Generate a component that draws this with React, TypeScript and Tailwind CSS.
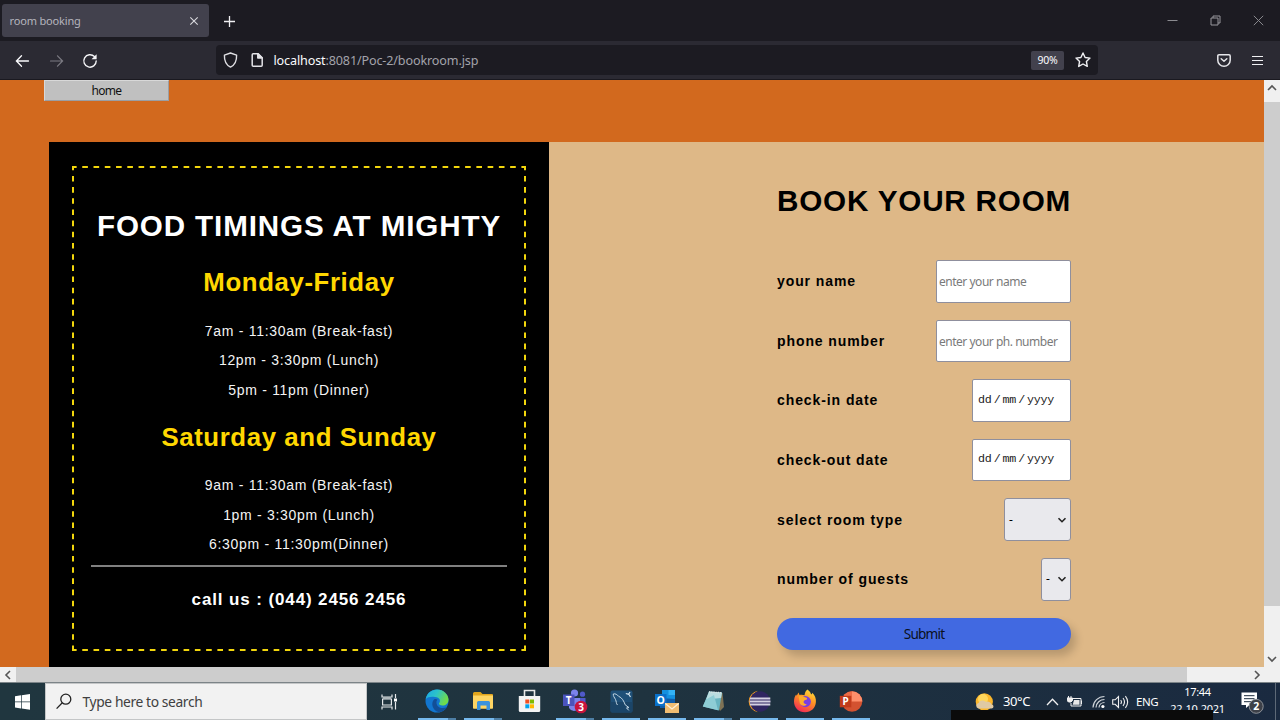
import type { ReactNode } from "react";

const Chevron = ({ d, className }: { d: string; className: string }) => (
  <svg viewBox="0 0 10 10" className={className} fill="none" stroke="currentColor" strokeWidth="1.6">
    <path d={d} />
  </svg>
);

function TabBar() {
  return (
    <div className="flex h-[41px] shrink-0 items-center bg-[#1c1b22] pl-[2px] text-[#fbfbfe]">
      <div className="flex h-[33px] w-[207px] items-center justify-between rounded-[3px] bg-[#42414d] pl-[7.5px] pr-[10px]">
        <span className="pt-[2px] font-['Noto_Sans',sans-serif] text-[11px] tracking-[-0.16px] text-[#b5b5bd]">room booking</span>
        <svg width="10" height="10" viewBox="0 0 10 10" fill="none" stroke="#d8d8dd" strokeWidth="1.1">
          <path d="M1.3 1.3l7.4 7.4M8.7 1.3L1.3 8.7" />
        </svg>
      </div>
      <svg className="ml-[14px] mt-[1px]" width="13" height="13" viewBox="0 0 13 13" fill="none" stroke="#f0f0f3" strokeWidth="1.3">
        <path d="M6.5 1v11M1 6.5h11" />
      </svg>
      <div className="ml-auto flex items-center gap-[32px] pr-[16.5px]">
        <svg width="11" height="11" viewBox="0 0 11 11" stroke="#8b8b90" strokeWidth="1">
          <path d="M.5 5.5h10" />
        </svg>
        <svg width="11" height="11" viewBox="0 0 11 11" fill="none" stroke="#97979c" strokeWidth="1">
          <path d="M1 3h7v7H1zM3 3V1h7v7H8" />
        </svg>
        <svg width="11" height="11" viewBox="0 0 11 11" fill="none" stroke="#88888d" strokeWidth="1">
          <path d="M.8.8l9.4 9.4M10.2.8L.8 10.2" />
        </svg>
      </div>
    </div>
  );
}

function Toolbar() {
  return (
    <div className="flex h-[39px] shrink-0 items-center border-b border-[#1a1920] bg-[#2b2a33]">
      <svg className="ml-[15px] mt-[1px]" width="15" height="14" viewBox="0 0 15 14" fill="none" stroke="#fbfbfe" strokeWidth="1.3" strokeLinecap="round">
        <path d="M1.5 7h12M6.5 1.8L1.4 7l5.1 5.2" />
      </svg>
      <svg className="ml-[19px] mt-[1px]" width="15" height="14" viewBox="0 0 15 14" fill="none" stroke="#7c7b83" strokeWidth="1.2" strokeLinecap="round">
        <path d="M1.5 7h12M8.5 1.8l5.1 5.2-5.1 5.2" />
      </svg>
      <svg className="ml-[18px] mt-[1px]" width="16" height="16" viewBox="0 0 16 16" fill="none" stroke="#f5f5f8" strokeWidth="1.4" strokeLinecap="round">
        <path d="M12.4 3.6A6.2 6.2 0 1 0 14.2 8" />
        <path d="M14.6 1.2v5.1H9.500z" fill="#f5f5f8" stroke="none" />
      </svg>
      <div className="ml-[118px] flex h-[30px] w-[882px] items-center rounded-[4px] bg-[#1c1b22]">
        <svg className="ml-[7px]" width="15" height="16" viewBox="0 0 15 16" fill="none" stroke="#dedee2" strokeWidth="1.4" strokeLinejoin="round">
          <path d="M7.5 1L13.6 3.1c.2 5.4-1.4 9.7-6.1 12C2.800 12.800 1.200 8.500 1.400 3.100z" />
        </svg>
        <svg className="ml-[13px]" width="12" height="14" viewBox="0 0 12 14" fill="none" stroke="#e3e3e7" strokeWidth="1.5" strokeLinejoin="round">
          <path d="M2.200 .8h5l4 4v7.400q0 1-1 1h-8q-1 0-1-1V1.800q0-1 1-1z" />
          <path d="M6.800 .8v4.300h4.400z" fill="#e3e3e7" />
        </svg>
        <div className="ml-[10.500px] pt-[2px] font-['Noto_Sans',sans-serif] text-[12.6px] tracking-[-0.140px] text-[#a3a3ab]">
          <span className="text-[#fbfbfe]">localhost</span>:8081/Poc-2/bookroom.jsp
        </div>
        <div className="ml-auto flex h-[19px] w-[33px] items-center justify-center rounded-[2px] bg-[#42414d] pt-[2px] font-['Noto_Sans',sans-serif] text-[10.5px] tracking-[-0.3px] text-[#fbfbfe]">
          90%
        </div>
        <svg className="ml-[11px] mr-[7px]" width="16" height="16" viewBox="0 0 16 16" fill="none" stroke="#f0f0f3" strokeWidth="1.4" strokeLinejoin="round">
          <path d="M8 1l2.100 4.500 4.900.6-3.600 3.400.9 4.900L8 12l-4.300 2.400.9-4.900L1 6.100l4.900-.6z" />
        </svg>
      </div>
      <svg className="ml-[119px]" width="14" height="13" viewBox="0 0 14 13" fill="none" stroke="#e6e6ea" strokeWidth="1.5" strokeLinejoin="round" strokeLinecap="round">
        <path d="M2 .8h10q1.200 0 1.200 1.200v4.200a6.200 6 0 0 1-12.400 0V2Q.8.8 2 .8z" />
        <path d="M4.200 4.700L7 7.300l2.800-2.600" />
      </svg>
      <svg className="ml-[20px]" width="13" height="11" viewBox="0 0 13 11" stroke="#f0f0f3" strokeWidth="1.200">
        <path d="M1 1.500h11M1 5.500h11M1 9.500h11" />
      </svg>
    </div>
  );
}

const Day = ({ children, className }: { children: ReactNode; className: string }) => (
  <h2 className={`${className} whitespace-nowrap text-[25.800px] font-bold leading-[30px] tracking-[0.600px] text-[#ffd700]`}>{children}</h2>
);

const Times = ({ items, className }: { items: string[]; className: string }) => (
  <div className={`${className} flex flex-col text-[14px] leading-[29.300px] tracking-[0.700px] text-[#f4f4f4]`}>
    {items.map((t) => (
      <p key={t}>{t}</p>
    ))}
  </div>
);

function Timings() {
  return (
    <section className="h-full w-[500px] bg-black px-[23px] pt-[24px]">
      <div className="relative h-[485px] w-[454px] text-center text-white">
        <svg className="absolute inset-0" width="454" height="485" viewBox="0 0 454 485" fill="none" stroke="#f2d60c" strokeWidth="2">
          <path d="M0 1h454M0 484h454" strokeDasharray="5.630 5.630" strokeDashoffset="1.000" />
          <path d="M1 0v485M453 0v485" strokeDasharray="5.590 5.590" strokeDashoffset="1.300" />
        </svg>
        <div className="flex flex-col pt-[43px]">
          <h1 className="whitespace-nowrap text-[29.600px] font-bold leading-[34px] tracking-[0.880px]">FOOD TIMINGS AT MIGHTY</h1>
          <Day className="mt-[24px]">Monday-Friday</Day>
          <Times className="mt-[19.800px]" items={["7am - 11:30am (Break-fast)", "12pm - 3:30pm (Lunch)", "5pm - 11pm (Dinner)"]} />
          <Day className="mt-[17.200px]">Saturday and Sunday</Day>
          <Times className="mt-[19px]" items={["9am - 11:30am (Break-fast)", "1pm - 3:30pm (Lunch)", "6:30pm - 11:30pm(Dinner)"]} />
          <hr className="ml-[19px] mt-[6.100px] w-[416px] border-t-2 border-[#808080]" />
          <h3 className="mt-[23px] text-[17px] font-bold leading-[20px] tracking-[0.880px]">call us : (044) 2456 2456</h3>
        </div>
      </div>
    </section>
  );
}

const Row = ({ label, children }: { label: string; children: ReactNode }) => (
  <div className="flex h-[42.600px] items-center justify-between">
    <label className="pt-[1px] text-[14px] font-bold tracking-[0.910px] text-black">{label}</label>
    {children}
  </div>
);

const TextBox = ({ hint }: { hint: string }) => (
  <div className="flex h-full w-[135px] items-center whitespace-nowrap rounded-[2px] border border-[#8f8f9d] bg-white pl-[2px] pt-[2px] font-['Noto_Sans',sans-serif] text-[12px] tracking-[-0.480px] text-[#7a7a7a]">
    {hint}
  </div>
);

const DateBox = () => (
  <div className="flex h-full w-[99px] items-center gap-[3.200px] rounded-[2px] border border-[#8f8f9d] bg-white pl-[5px] font-['Liberation_Mono',monospace] text-[11.700px] tracking-[-0.300px] text-[#222]">
    <span>dd</span>
    <span className="-mx-[1px]">/</span>
    <span>mm</span>
    <span className="-mx-[1px]">/</span>
    <span>yyyy</span>
  </div>
);

const SelectBox = ({ className }: { className: string }) => (
  <div className={`${className} flex h-full items-center justify-between rounded-[3px] border border-[#8f8f9d] bg-[#e9e9ed] pl-[4px] pr-[3px] font-['Noto_Sans',sans-serif] text-[12px] text-black`}>
    <span>-</span>
    <Chevron d="M1.500 3.200L5 6.700l3.500-3.500" className="size-[10px] text-[#222]" />
  </div>
);

function Booking() {
  return (
    <section className="h-full flex-1 bg-[#deb887] pl-[228px] pt-[42px]">
      <form className="w-[294px]">
        <h1 className="whitespace-nowrap text-[29.700px] font-bold leading-[34px] tracking-[0.780px] text-black">BOOK YOUR ROOM</h1>
        <div className="mt-[41.600px] flex flex-col gap-[17px]">
          <Row label="your name"><TextBox hint="enter your name" /></Row>
          <Row label="phone number"><TextBox hint="enter your ph. number" /></Row>
          <Row label="check-in date"><DateBox /></Row>
          <Row label="check-out date"><DateBox /></Row>
          <Row label="select room type"><SelectBox className="w-[67px]" /></Row>
          <Row label="number of guests"><SelectBox className="w-[30px]" /></Row>
          <button type="button" className="h-[32px] rounded-full bg-[#4169e1] pt-[1px] font-['Noto_Sans',sans-serif] text-[13.600px] tracking-[-0.800px] text-[#0b1020] shadow-[5px_6px_9px_rgba(0,0,0,0.18)]">
            Submit
          </button>
        </div>
      </form>
    </section>
  );
}

const Edge = () => (
  <svg width="24" height="24" viewBox="0 0 24 24">
    <defs>
      <linearGradient id="edgeTop" x1="0" y1="0" x2="1" y2=".4">
        <stop offset="0" stopColor="#1aa7e8" />
        <stop offset=".5" stopColor="#2cc3c8" />
        <stop offset="1" stopColor="#6fdc4a" />
      </linearGradient>
    </defs>
    <circle cx="12" cy="12" r="11.500" fill="#1276cf" />
    <path d="M.8 10C2 4 6.500.5 12 .5c6.500 0 11.500 5 11.500 10 0 4-3 6-6 6-2.500 0-4-1-3.500-2.200 2-2.200 1-6.300-4-6.300C6 7.500 2.500 8 .8 10z" fill="url(#edgeTop)" />
    <path d="M9 10.500c-3.500 3.500-1.500 11 4.500 12.500 3.500.2 7-2 8.700-5-4.700 2.600-11.200.5-10.700-5 0-1 .5-1.700 1-2.500-1-.6-2.500-.7-3.500 0z" fill="#124f97" />
  </svg>
);

const Explorer = () => (
  <svg width="22" height="20" viewBox="0 0 22 20">
    <path d="M1 2.500Q1 1 2.500 1h6l2 2H20q1 0 1 1v12.500H1z" fill="#e2a51c" />
    <path d="M1 4.500h20V17q0 .8-.8.8H1.800Q1 17.800 1 17z" fill="#ffd563" />
    <path d="M5 19v-7.500q0-1.500 1.500-1.500h10q1.500 0 1.500 1.500V19h-3.500v-4.500h-6V19z" fill="#3c93dc" />
  </svg>
);

const Store = () => (
  <svg width="23" height="24" viewBox="0 0 23 24">
    <path d="M6.500 8V1.500h10V8" fill="none" stroke="#e8e8e8" strokeWidth="1.600" />
    <path d="M.8 7h21.400v14.500q0 1.500-1.500 1.500H2.300Q.8 23 .8 21.500z" fill="#f3f3f3" />
    <path d="M7.300 10.500h4v4h-4z" fill="#f25022" />
    <path d="M12 10.500h4v4h-4z" fill="#7fba00" />
    <path d="M7.300 15.300h4v4h-4z" fill="#00a4ef" />
    <path d="M12 15.300h4v4h-4z" fill="#ffb900" />
  </svg>
);

const Teams = () => (
  <svg width="26" height="25" viewBox="0 0 26 25">
    <circle cx="12.500" cy="4" r="3.600" fill="#7b83eb" />
    <circle cx="20.500" cy="5.200" r="2.600" fill="#5059c9" />
    <path d="M16 9h7.500v7a4 4 0 0 1-7.500 1z" fill="#5059c9" />
    <path d="M7 9h11v8a6 6 0 0 1-11 2z" fill="#7b83eb" />
    <path d="M1 5.500h11.500v11.500H1z" fill="#4b53bc" />
    <text x="6.700" y="14.800" textAnchor="middle" fontFamily="Noto Sans, sans-serif" fontWeight="700" fontSize="10" fill="#fff">T</text>
    <circle cx="19" cy="18" r="6.300" fill="#c8143c" />
    <text x="19" y="21.800" textAnchor="middle" fontFamily="Noto Sans, sans-serif" fontWeight="700" fontSize="10" fill="#fff">3</text>
  </svg>
);

const Workbench = () => (
  <svg width="23" height="23" viewBox="0 0 23 23">
    <rect x=".5" y=".5" width="22" height="22" rx="2" fill="#1f5078" />
    <path d="M.5 12h22v9q0 1.500-1.500 1.500H2Q.5 22.500 .5 21z" fill="#1b4568" />
    <path d="M7.500 15c-1.500-1.500-1-3.500-2-5.500C4.500 7.500 3 6 3.300 4c2-.8 4 .8 5.300 2.300 3.500 1.200 5.300 5 6.600 8.500l3.800 2.800-2.500.3 2.300 2.500" fill="none" stroke="#c4d7e4" strokeWidth="1" />
    <path d="M15.800 3.500l3 .8 1.700 2.700M20 2l-1.500 2.500" fill="none" stroke="#d8e6ef" strokeWidth="1.200" />
  </svg>
);

const Outlook = () => (
  <svg width="26" height="25" viewBox="0 0 26 25">
    <path d="M8 1h13v9H8z" fill="#1490df" />
    <path d="M14.500 1H21v5h-6.500z" fill="#33b2f5" />
    <path d="M6 9l15 1v9H6z" fill="#0f5ca8" />
    <path d="M1 5h11.500v12H1z" fill="#0a70c9" />
    <text x="6.700" y="14.800" textAnchor="middle" fontFamily="Noto Sans, sans-serif" fontWeight="700" fontSize="10.500" fill="#fff">O</text>
    <path d="M11 14h14v10H11z" fill="#f0bd72" />
    <path d="M11.300 14.400L18 20l6.700-5.600" fill="none" stroke="#fff0d8" strokeWidth="1.300" />
  </svg>
);

const Notepad = () => (
  <svg width="23" height="22" viewBox="0 0 23 22">
    <path d="M7 2l13.500 1L22 17l-4 4z" fill="#7e7255" />
    <path d="M7 1.500l13 1L17 20.500.8 16.500z" fill="#68b4c0" />
    <path d="M7 1.500l13 1-.9 5.500L4 9.500z" fill="#b9dde0" />
    <path d="M4 9.500L12 5l4 15.200L.8 16.500z" fill="#8ecdd5" />
    <path d="M7 2l13 .8" stroke="#d9e4e4" strokeWidth="1.500" strokeDasharray="1.200 1" />
  </svg>
);

const Eclipse = () => (
  <svg width="24" height="23" viewBox="0 0 24 23">
    <path d="M11 .8A10.800 10.800 0 0 0 11 22.200 12 12 0 0 1 11 .8z" fill="#f59a23" />
    <circle cx="13" cy="11.500" r="10.300" fill="#2f2561" />
    <path d="M3 8.500h20.300M2.500 11.500h21M3 14.500h20.300" stroke="#d4d0e2" strokeWidth="1.900" />
  </svg>
);

const Firefox = () => (
  <svg width="24" height="24" viewBox="0 0 24 24">
    <defs>
      <linearGradient id="fox" x1=".8" y1="0" x2=".3" y2="1">
        <stop offset="0" stopColor="#ffe23a" />
        <stop offset=".45" stopColor="#ff9124" />
        <stop offset="1" stopColor="#f22855" />
      </linearGradient>
    </defs>
    <path d="M14.500.5c2 1.500 3.200 3 3.500 4.800 1-.2 1.200-.8 1.200-1.600 2.800 2.500 4 6 3.700 9.300C22.500 19 18 23.300 12 23.300 5.500 23.300 1 18.500 1 12.500c0-3.500 1-5.500 2.200-7l.5 1.200L5.500 3.500l1 2.500c2-.5 3.500-.3 5 .3.3-2.800 1.300-4.500 3-5.800z" fill="url(#fox)" />
    <circle cx="12.300" cy="12.600" r="5.600" fill="#7a3fe0" />
    <path d="M5.500 7.500c2.500-.9 4.500-.4 6.300.8 2 .2 2.700 1.200 2.200 2-1 .9-2.700.7-3.300 2-.6 1.700 1 3 3 2.900-1.300 2-4.300 2-5.800.6-2-1.800-1.300-5-2.400-8.300z" fill="#ffac2b" />
  </svg>
);

const PowerPoint = () => (
  <svg width="24" height="23" viewBox="0 0 24 23">
    <circle cx="13" cy="11.500" r="10.300" fill="#d35230" />
    <path d="M13 1.200a10.300 10.300 0 0 1 10.300 10.300H13z" fill="#ff8f6b" />
    <path d="M2.700 11.500A10.300 10.300 0 0 1 13 1.200v10.300z" fill="#ed6c47" />
    <path d="M.8 5.800h11.500v11.500H.8z" fill="#c13b1b" />
    <text x="6.600" y="15.300" textAnchor="middle" fontFamily="Noto Sans, sans-serif" fontWeight="700" fontSize="10" fill="#fff">P</text>
  </svg>
);

type App = { icon: ReactNode; running: boolean; stacked?: boolean };

const apps: App[] = [
  { icon: <Edge />, running: true, stacked: true },
  { icon: <Explorer />, running: true, stacked: true },
  { icon: <Store />, running: false },
  { icon: <Teams />, running: true, stacked: true },
  { icon: <Workbench />, running: true },
  { icon: <Outlook />, running: true },
  { icon: <Notepad />, running: true, stacked: true },
  { icon: <Eclipse />, running: true },
  { icon: <Firefox />, running: true },
  { icon: <PowerPoint />, running: true },
];

function Taskbar() {
  return (
    <div className="relative flex h-[38px] shrink-0 items-stretch overflow-hidden border-t border-[#7c8488] bg-linear-to-r from-[#20363f] via-[#1f333f] to-[#1a2a40] font-['Noto_Sans',sans-serif] text-white">
      <div className="flex w-[45px] items-center pl-[15px]">
        <svg width="15" height="16" viewBox="0 0 15 16" fill="#fff">
          <path d="M0 2.200l6-.9v6.200H0zM6.700 1.200L15 0v7.500H6.700zM0 8.200h6v6.200l-6-.8zM6.700 8.200H15v7.600l-8.300-1.200z" />
        </svg>
      </div>
      <div className="flex w-[322px] items-center border border-[#c4c6c7] bg-[#f2f2f2] pl-[10px]">
        <svg width="17" height="17" viewBox="0 0 17 17" fill="none" stroke="#222" strokeWidth="1.300">
          <circle cx="9.800" cy="6.200" r="5" />
          <path d="M6.300 9.800L.6 15.600" />
        </svg>
        <span className="ml-[9.500px] pt-[1px] text-[13.800px] tracking-[-0.380px] text-[#404040]">Type here to search</span>
      </div>
      <div className="flex w-[47px] items-center pl-[14px]">
        <svg width="17" height="16" viewBox="0 0 17 16" fill="none" stroke="#e4e8ea" strokeWidth="1.200">
          <path d="M1 .5v2.500h10V.5M1 15.500V13h10v2.500M1.600 5h8.800v6H1.600zM14.500 0v4M14.500 8v7.500" />
          <path d="M13 4.500h3v3h-3z" fill="#fff" stroke="none" />
          <path d="M2 3h8v2H2z" fill="#aeb7bb" stroke="none" />
        </svg>
      </div>
      {apps.map((app, i) => (
        <div key={i} className="flex w-[46px] flex-col items-center">
          <div className="flex h-[35px] items-center justify-center pt-[1px]">{app.icon}</div>
          {app.running && (
            <div className="flex h-[2px] w-[38px]">
              <div className="flex-1 bg-[#76b9ed]" />
              {app.stacked && <div className="w-[8px] bg-[#4e7fa5]" />}
            </div>
          )}
        </div>
      ))}
      <div className="ml-auto flex items-center">
        <svg width="19" height="18" viewBox="0 0 19 18">
          <circle cx="9.300" cy="8.800" r="8.600" fill="#fbb62b" />
          <circle cx="8" cy="6" r="5" fill="#ffd65c" />
          <path d="M3.500 15.500a2.800 2.800 0 0 1 0-5.500 4.500 4.500 0 0 1 7.500-1 4 4 0 0 1 5.500 2.500 2 2 0 0 1 0 4z" fill="#dfc9a4" />
        </svg>
        <span className="ml-[9px] w-[28px] whitespace-nowrap pt-[1px] text-[13px] tracking-[-0.400px]">30°C</span>
        <svg className="ml-[15px]" width="13" height="8" viewBox="0 0 13 8" fill="none" stroke="#f0f0f0" strokeWidth="1.300">
          <path d="M1 7l5.500-5.700L12 7" />
        </svg>
        <svg className="ml-[8px]" width="16" height="12" viewBox="0 0 16 12" fill="none" stroke="#f0f0f0" strokeWidth="1">
          <path d="M6 2.500h8v7.500H4V7M14.500 4.500v3.500" />
          <path d="M7 4h5.500v4.700H5.700z" fill="#e6e6e6" stroke="none" />
          <path d="M0 2h5.500v2.500L4 6H1.500L0 4.500zM1.500 0v2M4 0v2" fill="#f0f0f0" />
        </svg>
        <svg className="ml-[9px]" width="13" height="14" viewBox="0 0 13 14" fill="none" stroke="#ced3d8" strokeWidth="1.200">
          <path d="M1 12.500A11.500 11.500 0 0 1 12.500 1.500M4 12.500a8.500 8.500 0 0 1 8.500-8M7 12.500A5.500 5.500 0 0 1 12.500 7.500" />
          <circle cx="10.900" cy="11.500" r="1.600" fill="#fff" stroke="none" />
        </svg>
        <svg className="ml-[7px]" width="17" height="14" viewBox="0 0 17 14" fill="none" stroke="#f0f0f0" strokeWidth="1.100">
          <path d="M.7 4.800h2.500L6.500 1.500v11L3.200 9.300H.7zM8.700 5q1.500 2 0 4M11 3q3 4 0 8M13.400 1.200q4.500 5.800 0 11.600" />
        </svg>
        <span className="ml-[7px] w-[22px] whitespace-nowrap text-[11.500px] tracking-[-0.500px]">ENG</span>
        <div className="ml-[11.500px] flex w-[56px] flex-col items-center self-stretch whitespace-nowrap pt-[1px] text-[11px] leading-[16.500px] tracking-[-0.300px]">
          <span>17:44</span>
          <span>22-10-2021</span>
        </div>
        <div className="relative ml-[15.500px] h-[24px] w-[23px]">
          <svg width="23" height="24" viewBox="0 0 23 24">
            <path d="M.5 2.500h15.500v12.500H8.500l-3.500 3V15H.5z" fill="#fff" />
            <path d="M3 5.700h10.500M3 8.700h10.500M3 11.700h8" stroke="#1b2a3c" strokeWidth="1" />
            <circle cx="15.200" cy="16.300" r="7" fill="#3c4048" stroke="#8c9198" strokeWidth="1" />
            <text x="15.200" y="20" textAnchor="middle" fontFamily="Noto Sans, sans-serif" fontWeight="700" fontSize="10.500" fill="#fff">2</text>
          </svg>
        </div>
        <div className="ml-[11px] h-full w-[5px] border-l border-[#5d6977]" />
      </div>
      <div className="absolute bottom-0 left-[951px] h-[10px] w-[262px] bg-[#0b0b0b]" />
    </div>
  );
}

export default function Page() {
  return (
    <div className="flex h-[720px] w-[1280px] flex-col overflow-hidden font-['Liberation_Sans',sans-serif]">
      <TabBar />
      <Toolbar />
      <div className="flex h-[587px] shrink-0">
        <main className="flex w-[1264px] flex-col overflow-hidden bg-[#d2691e]">
          <div className="h-[62.400px] shrink-0 pl-[44px]">
            <div className="flex h-[21px] w-[125px] items-center justify-center border border-[#9a9ea4] border-l-[#d8d8d8] border-t-[#d8d8d8] bg-[#c0c0c0] font-['Noto_Sans',sans-serif] text-[12px] tracking-[-0.700px] text-[#111]">
              home
            </div>
          </div>
          <div className="flex min-h-0 flex-1 pl-[49px]">
            <Timings />
            <Booking />
          </div>
        </main>
        <div className="flex w-[16px] flex-col items-center bg-[#f0f0f0]">
          <div className="flex h-[22px] shrink-0 items-start pt-[3px]">
            <Chevron d="M1 7l4-4 4 4" className="size-[10px] text-[#555]" />
          </div>
          <div className="h-[504px] w-full bg-[#cdcdcd]" />
          <div className="mt-auto pb-[3px]">
            <Chevron d="M1 3l4 4 4-4" className="size-[10px] text-[#555]" />
          </div>
        </div>
      </div>
      <div className="flex h-[15px] shrink-0 items-center bg-[#f0f0f0]">
        <div className="flex w-[16px] justify-center">
          <Chevron d="M7 1L3 5l4 4" className="size-[10px] text-[#555]" />
        </div>
        <div className="h-full w-[1171px] bg-[#cdcdcd]" />
        <Chevron d="M3 1l4 4-4 4" className="ml-auto mr-[18px] size-[10px] text-[#555]" />
      </div>
      <Taskbar />
    </div>
  );
}
